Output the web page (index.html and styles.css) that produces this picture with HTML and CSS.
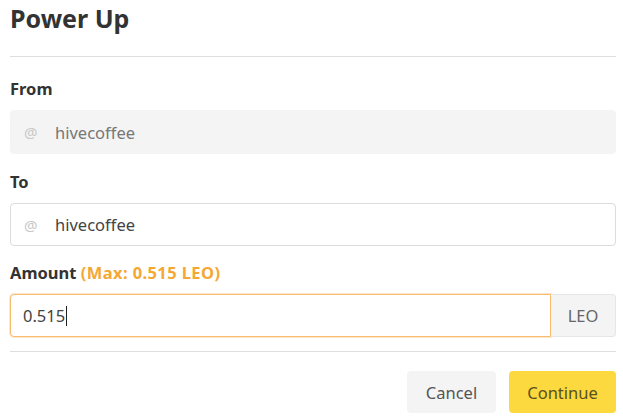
FILE: index.html
```html
<!DOCTYPE html>
<html>
<head>
<meta charset="utf-8">
<link rel="stylesheet" href="styles.css">
</head>
<body>
<div class="modal">
  <h1 class="title">Power Up</h1>
  <hr class="divider">
  <div class="field">
    <div class="label">From</div>
    <div class="input disabled"><span class="at">@</span><span class="val">hivecoffee</span></div>
  </div>
  <div class="field">
    <div class="label">To</div>
    <div class="input short"><span class="at">@</span><span class="val">hivecoffee</span></div>
  </div>
  <div class="field amount">
    <div class="label">Amount <span class="max">(Max: 0.515 LEO)</span></div>
    <div class="group">
      <div class="input focus"><span class="val amt">0.515</span><span class="caret"></span></div>
      <div class="addon">LEO</div>
    </div>
  </div>
  <hr class="divider bottom">
  <div class="actions">
    <button class="btn cancel">Cancel</button>
    <button class="btn continue">Continue</button>
  </div>
</div>
</body>
</html>
```
FILE: styles.css
```css
* { box-sizing: border-box; }
body {
  margin: 0;
  background: #fff;
  font-family: "Noto Sans", "Open Sans", sans-serif;
  color: #333;
}
.modal {
  padding: 0 7px 0 10px;
  width: 623px;
}
.title {
  margin: 0;
  padding-top: 0;
  font-size: 25px;
  font-weight: 700;
  line-height: 36px;
  color: #333;
}
.divider {
  border: 0;
  border-top: 1px solid #dedede;
  margin: 20px 0 0 0;
}
.field { margin-top: 20px; }
.field + .field { margin-top: 16px; }
.field.amount { margin-top: 15px; }
.label {
  font-size: 16.5px;
  font-weight: 700;
  line-height: 24px;
  color: #333;
  margin-bottom: 9px;
}
.max { color: #f5a733; letter-spacing: 0.4px; }
.input {
  height: 44px;
  border: 1px solid #dcdcdc;
  border-radius: 4px;
  display: flex;
  align-items: center;
  padding-left: 13px;
  font-size: 16.5px;
  background: #fff;
}
.input.short { height: 43px; }
.input.disabled {
  background: #f4f4f4;
  border-color: #f4f4f4;
  color: #777;
}
.at {
  color: #c8c8c8;
  font-size: 15px;
  width: 31px;
}
.val { color: #444; }
.disabled .val { color: #777; }
.group { display: flex; }
.group .input.focus {
  flex: 1;
  height: 43px;
  border-color: #f7bd6c;
  border-radius: 4px 0 0 4px;
  box-shadow: 0 0 0 1px rgba(247, 189, 108, 0.35);
  padding-left: 12px;
}
.caret {
  display: inline-block;
  width: 1px;
  height: 20px;
  background: #222;
  margin-left: 1px;
}
.addon {
  width: 65px;
  height: 43px;
  background: #f4f4f4;
  border: 1px solid #e6e6e6;
  border-left: 0;
  border-radius: 0 4px 4px 0;
  display: flex;
  align-items: center;
  justify-content: center;
  font-size: 16.5px;
  color: #666;
}
.divider.bottom { margin-top: 14px; }
.actions {
  display: flex;
  justify-content: flex-end;
  gap: 13px;
  margin-top: 19px;
}
.btn {
  height: 42px;
  border: 0;
  border-radius: 4px;
  font-family: "Noto Sans", "Open Sans", sans-serif;
  font-size: 16.5px;
  color: #555;
  cursor: pointer;
}
.cancel { width: 89px; background: #f4f4f4; }
.continue { width: 107px; background: #fcd93e; color: #5a5020; }
```
